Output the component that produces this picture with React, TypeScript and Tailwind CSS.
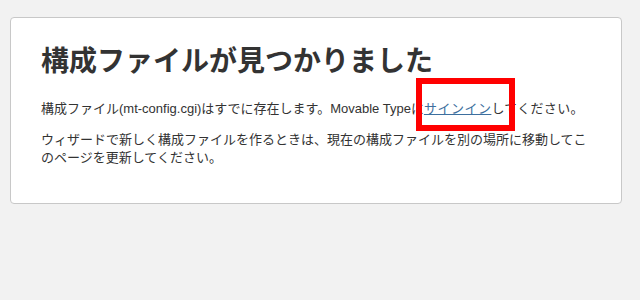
import React from "react";

const App: React.FC = () => {
  return (
    <div
      className="relative h-[300px] w-[640px] overflow-hidden bg-[#f2f2f2] pt-[17px] pl-[10px] text-[#333]"
      style={{ fontFamily: '"Liberation Sans", "Noto Sans CJK JP", sans-serif' }}
    >
      <div className="w-[612px] rounded-[4px] border border-[#c8c8c8] bg-white px-[30px] pt-[28px] pb-[23px]">
        <h1 className="text-[28px] font-bold leading-[32px]">
          構成ファイルが見つかりました
        </h1>
        <p className="mt-[22px] mb-[13px] text-[13px] leading-[18px]">
          構成ファイル(mt-config.cgi)はすでに存在します。Movable Typeに
          <a href="#" className="tracking-[0.5px] text-[#3d6f9e] underline">
            サインイン
          </a>
          <span className="tracking-[0.3px]">してください。</span>
        </p>
        <p className="mb-[13px] text-[13px] leading-[18px]">
          ウィザードで新しく構成ファイルを作るときは、現在の構成ファイルを別の場所に移動してこのページを更新してください。
        </p>
      </div>

      {/* highlight overlay */}
      <div className="absolute left-[416px] top-[78px] h-[53px] w-[99px] border-[6px] border-[#ff0000]" />
    </div>
  );
};

export default App;
